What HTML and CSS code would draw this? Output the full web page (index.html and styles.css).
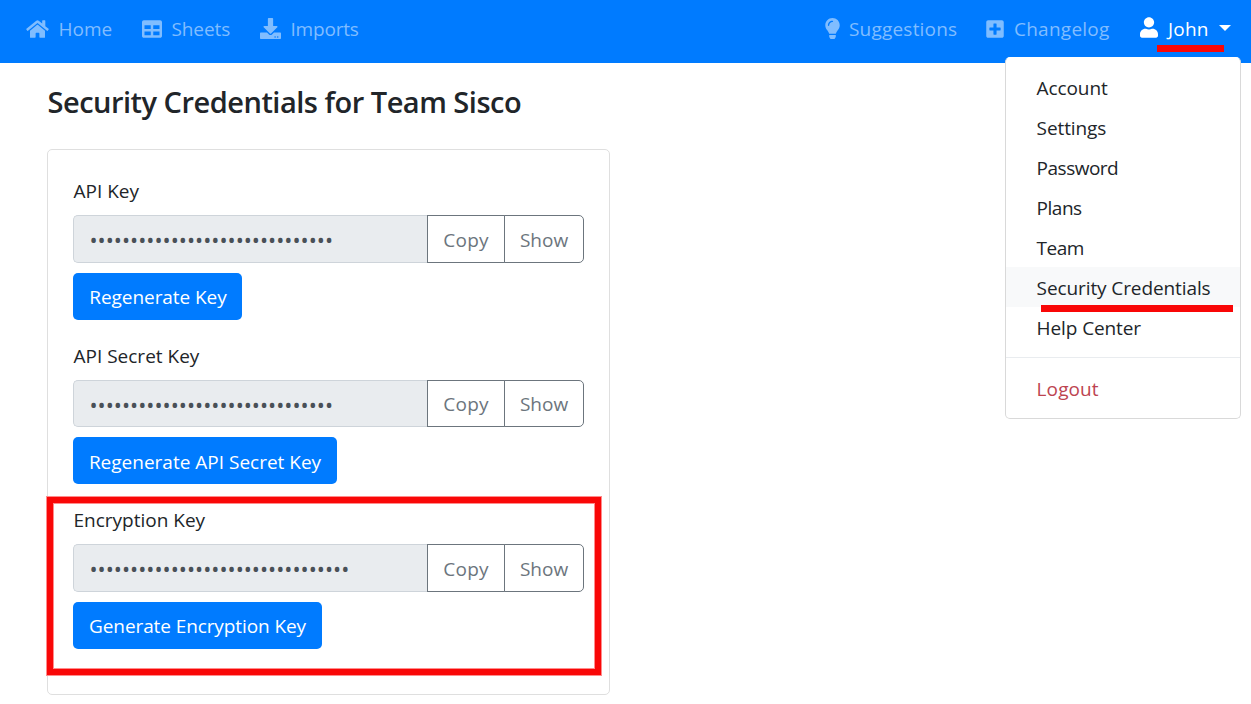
FILE: index.html
```html
<!DOCTYPE html>
<html lang="en">
<head>
<meta charset="utf-8">
<title>Security Credentials</title>
<link rel="stylesheet" href="styles.css">
</head>
<body>
<header class="navbar">
  <nav class="nav">
    <a class="nav-link home"><svg class="icon" width="23" height="20" viewBox="0 0 576 512"><path d="M280.400 148.300L96 300.100V464a16 16 0 0 0 16 16l112.100-.300a16 16 0 0 0 15.900-16V368a16 16 0 0 1 16-16h64a16 16 0 0 1 16 16v95.600a16 16 0 0 0 16 16.100L464 480a16 16 0 0 0 16-16V300L295.700 148.300a12.200 12.200 0 0 0-15.300 0zM571.600 251.500L488 182.600V44.100a12 12 0 0 0-12-12h-56a12 12 0 0 0-12 12v72.600L318.500 43a48 48 0 0 0-61 0L4.300 251.500a12 12 0 0 0-1.600 16.900l25.500 31a12 12 0 0 0 16.900 1.600l235.200-193.700a12.200 12.200 0 0 1 15.300 0L530.900 301a12 12 0 0 0 16.900-1.600l25.500-31a12 12 0 0 0-1.700-16.900z"/></svg><span>Home</span></a>
    <a class="nav-link sheets"><svg class="icon" width="20" height="20" viewBox="0 0 512 512"><path d="M464 32H48C21.500 32 0 53.500 0 80v352c0 26.500 21.500 48 48 48h416c26.500 0 48-21.500 48-48V80c0-26.500-21.500-48-48-48zM224 416H64v-96h160v96zm0-160H64v-96h160v96zm224 160H288v-96h160v96zm0-160H288v-96h160v96z"/></svg><span>Sheets</span></a>
    <a class="nav-link imports"><svg class="icon" width="21" height="21" viewBox="0 0 512 512"><path d="M216 0h80c13.300 0 24 10.700 24 24v168h87.700c17.800 0 26.700 21.500 14.100 34.100L269.700 378.300c-7.500 7.500-19.800 7.500-27.300 0L90.100 226.100c-12.600-12.600-3.700-34.100 14.100-34.100H192V24c0-13.300 10.700-24 24-24zm296 376v112c0 13.300-10.700 24-24 24H24c-13.300 0-24-10.700-24-24V376c0-13.300 10.700-24 24-24h146.700l49 49c20.100 20.100 52.500 20.100 72.600 0l49-49H488c13.300 0 24 10.700 24 24zm-124 88c0-11-9-20-20-20s-20 9-20 20 9 20 20 20 20-9 20-20zm64 0c0-11-9-20-20-20s-20 9-20 20 9 20 20 20 20-9 20-20z"/></svg><span>Imports</span></a>
  </nav>
  <nav class="nav nav-right">
    <a class="nav-link suggestions"><svg class="icon" width="15" height="21" viewBox="0 0 352 512"><path d="M96.100 454.400c0 6.300 1.900 12.500 5.400 17.700l17.100 25.700a32 32 0 0 0 26.600 14.300h61.700a32 32 0 0 0 26.600-14.300l17.100-25.700a32 32 0 0 0 5.400-17.700l0-38.400H96l.1 38.400zM0 176c0 44.400 16.500 84.900 43.600 115.800 16.500 18.900 42.400 58.200 52.200 91.500v.8h160.400v-.8c9.900-33.300 35.700-72.600 52.200-91.500C335.600 260.900 352 220.400 352 176 352 78.600 272.900-.3 175.500 0 73.400.3 0 83 0 176zm176-80c-44.100 0-80 35.900-80 80 0 8.800-7.200 16-16 16s-16-7.200-16-16c0-61.800 50.200-112 112-112 8.800 0 16 7.200 16 16s-7.200 16-16 16z"/></svg><span>Suggestions</span></a>
    <a class="nav-link changelog"><svg class="icon" width="18" height="20" viewBox="0 0 448 512"><path d="M400 32H48C21.500 32 0 53.500 0 80v352c0 26.500 21.500 48 48 48h352c26.500 0 48-21.500 48-48V80c0-26.500-21.500-48-48-48zm-32 252c0 6.600-5.400 12-12 12h-92v92c0 6.600-5.400 12-12 12h-56c-6.600 0-12-5.400-12-12v-92H92c-6.600 0-12-5.400-12-12v-56c0-6.600 5.400-12 12-12h92v-92c0-6.600 5.400-12 12-12h56c6.600 0 12 5.400 12 12v92h92c6.600 0 12 5.400 12 12v56z"/></svg><span>Changelog</span></a>
    <a class="nav-link user"><svg class="icon user-icon" width="18" height="21" viewBox="0 0 448 512"><path d="M224 256c70.700 0 128-57.300 128-128S294.700 0 224 0 96 57.300 96 128s57.300 128 128 128zm89.600 32h-16.700c-22.200 10.200-46.900 16-72.900 16s-50.600-5.800-72.900-16h-16.700C60.200 288 0 348.200 0 422.400V464c0 26.500 21.500 48 48 48h352c26.500 0 48-21.500 48-48v-41.600c0-74.200-60.200-134.400-134.400-134.400z"/></svg><span>John</span><i class="caret"></i><b class="mark mark-user"></b></a>
  </nav>
  <div class="menu">
    <a class="item">Account</a>
    <a class="item">Settings</a>
    <a class="item tight">Password</a>
    <a class="item tight">Plans</a>
    <a class="item tight">Team</a>
    <a class="item active">Security Credentials<b class="mark mark-item"></b></a>
    <a class="item">Help Center</a>
    <hr class="divider">
    <a class="item danger">Logout</a>
  </div>
</header>
<main class="page">
  <h1 class="title">Security Credentials for Team Sisco</h1>
  <section class="card">
    <div class="group">
      <label class="label">API Key</label>
      <div class="field"><div class="secret">••••••••••••••••••••••••••••••</div><button class="btn-outline copy">Copy</button><button class="btn-outline show">Show</button></div>
      <button class="btn w1">Regenerate Key</button>
    </div>
    <div class="group">
      <label class="label">API Secret Key</label>
      <div class="field short"><div class="secret">••••••••••••••••••••••••••••••</div><button class="btn-outline copy">Copy</button><button class="btn-outline show">Show</button></div>
      <button class="btn w2">Regenerate API Secret Key</button>
    </div>
    <div class="group">
      <label class="label">Encryption Key</label>
      <div class="field"><div class="secret">••••••••••••••••••••••••••••••••</div><button class="btn-outline copy">Copy</button><button class="btn-outline show">Show</button></div>
      <button class="btn w3">Generate Encryption Key</button>
    </div>
    <b class="highlight"></b>
  </section>
</main>
</body>
</html>
```
FILE: styles.css
```css
* { box-sizing: border-box; }
body {
  margin: 0;
  background: #fff;
  color: #212529;
  font: 400 19px/30px "Open Sans", "Noto Sans", sans-serif;
}
button { font: inherit; }
.navbar {
  position: relative;
  display: flex;
  justify-content: space-between;
  height: 63px;
  padding: 0 20px 6px 26px;
  background: #007bff;
}
.nav { display: flex; align-items: center; }
.nav-link {
  position: relative;
  display: flex;
  align-items: center;
  gap: 9.500px;
  color: #80bdff;
  white-space: nowrap;
}
.icon { flex: none; fill: currentColor; }
.user-icon { margin-top: -2px; }
.home { width: 116px; }
.sheets { width: 118px; letter-spacing: -.1px; }
.imports { letter-spacing: -.2px; }
.suggestions { width: 161px; gap: 9px; letter-spacing: .2px; }
.changelog { width: 153.500px; gap: 10px; letter-spacing: .25px; }
.user { width: 91.500px; gap: 10.500px; color: #fff; letter-spacing: .2px; }
.caret {
  margin-top: -2px;
  border: 6px solid transparent;
  border-top-color: #fff;
  border-bottom: 0;
}
.mark { position: absolute; height: 7px; background: #f90707; }
.mark-user { left: 17.500px; width: 67px; top: 31.500px; }
.mark-item { left: 35px; width: 192px; top: 37.500px; }
.menu {
  position: absolute;
  top: 57px;
  left: 1005px;
  width: 236px;
  height: 362px;
  padding: 9px 0;
  background: #fff;
  border: 1px solid #d9d9d9;
  border-top-color: #fff;
  border-radius: 5px;
}
.item {
  position: relative;
  display: flex;
  align-items: center;
  height: 40px;
  padding: 2px 0 0 30.600px;
  letter-spacing: -.1px;
  white-space: nowrap;
}
.tight { letter-spacing: -.5px; }
.active { background: #f8f9fa; }
.danger { color: #bd4450; letter-spacing: .1px; }
.divider { height: 1px; margin: 10px 0; border: 0; background: #e9ecef; }
.page { padding: 20px 47px; }
.title {
  margin: 0 0 28px;
  padding-left: .5px;
  font-size: 29px;
  font-weight: 600;
  letter-spacing: -.5px;
  line-height: 38px;
}
.card {
  position: relative;
  width: 563px;
  height: 546px;
  padding: 26px 25px;
  border: 1px solid #dfdfdf;
  border-radius: 5px;
}
.group { height: 164.500px; }
.label { display: block; height: 39px; padding-left: .5px; }
.field { display: flex; height: 48px; margin-bottom: 10px; }
.short { height: 47px; }
.secret {
  display: flex;
  align-items: center;
  width: 354px;
  padding: 2px 0 0 15.500px;
  background: #e9ecef;
  border: 1px solid #ced4da;
  border-right: 0;
  border-radius: 5px 0 0 5px;
  color: #495057;
  font-size: 21.600px;
}
.short .secret { padding-top: 3px; }
.btn-outline {
  padding: 2px 0 0;
  background: #fff;
  border: 1px solid #6c757d;
  color: #6c757d;
}
.short .btn-outline { padding: 1px 0 0; }
.copy { width: 78px; letter-spacing: .2px; }
.show { width: 80px; margin-left: -1px; border-radius: 0 5px 5px 0; }
.btn {
  height: 47px;
  padding: 1px 0 0;
  border: 0;
  border-radius: 5px;
  background: #007bff;
  color: #fff;
  letter-spacing: -.06px;
}
.w1 { width: 169px; padding-left: 1px; }
.w2 { width: 264px; padding-top: 3px; letter-spacing: 0; }
.w3 { width: 249px; letter-spacing: -.1px; }
.highlight {
  position: absolute;
  left: -1px;
  top: 347px;
  width: 554px;
  height: 178px;
  border: 6px solid #f90707;
  box-shadow: 0 0 0 1px #ff8c8c, inset 0 0 0 1px #ff8c8c;
}
```
